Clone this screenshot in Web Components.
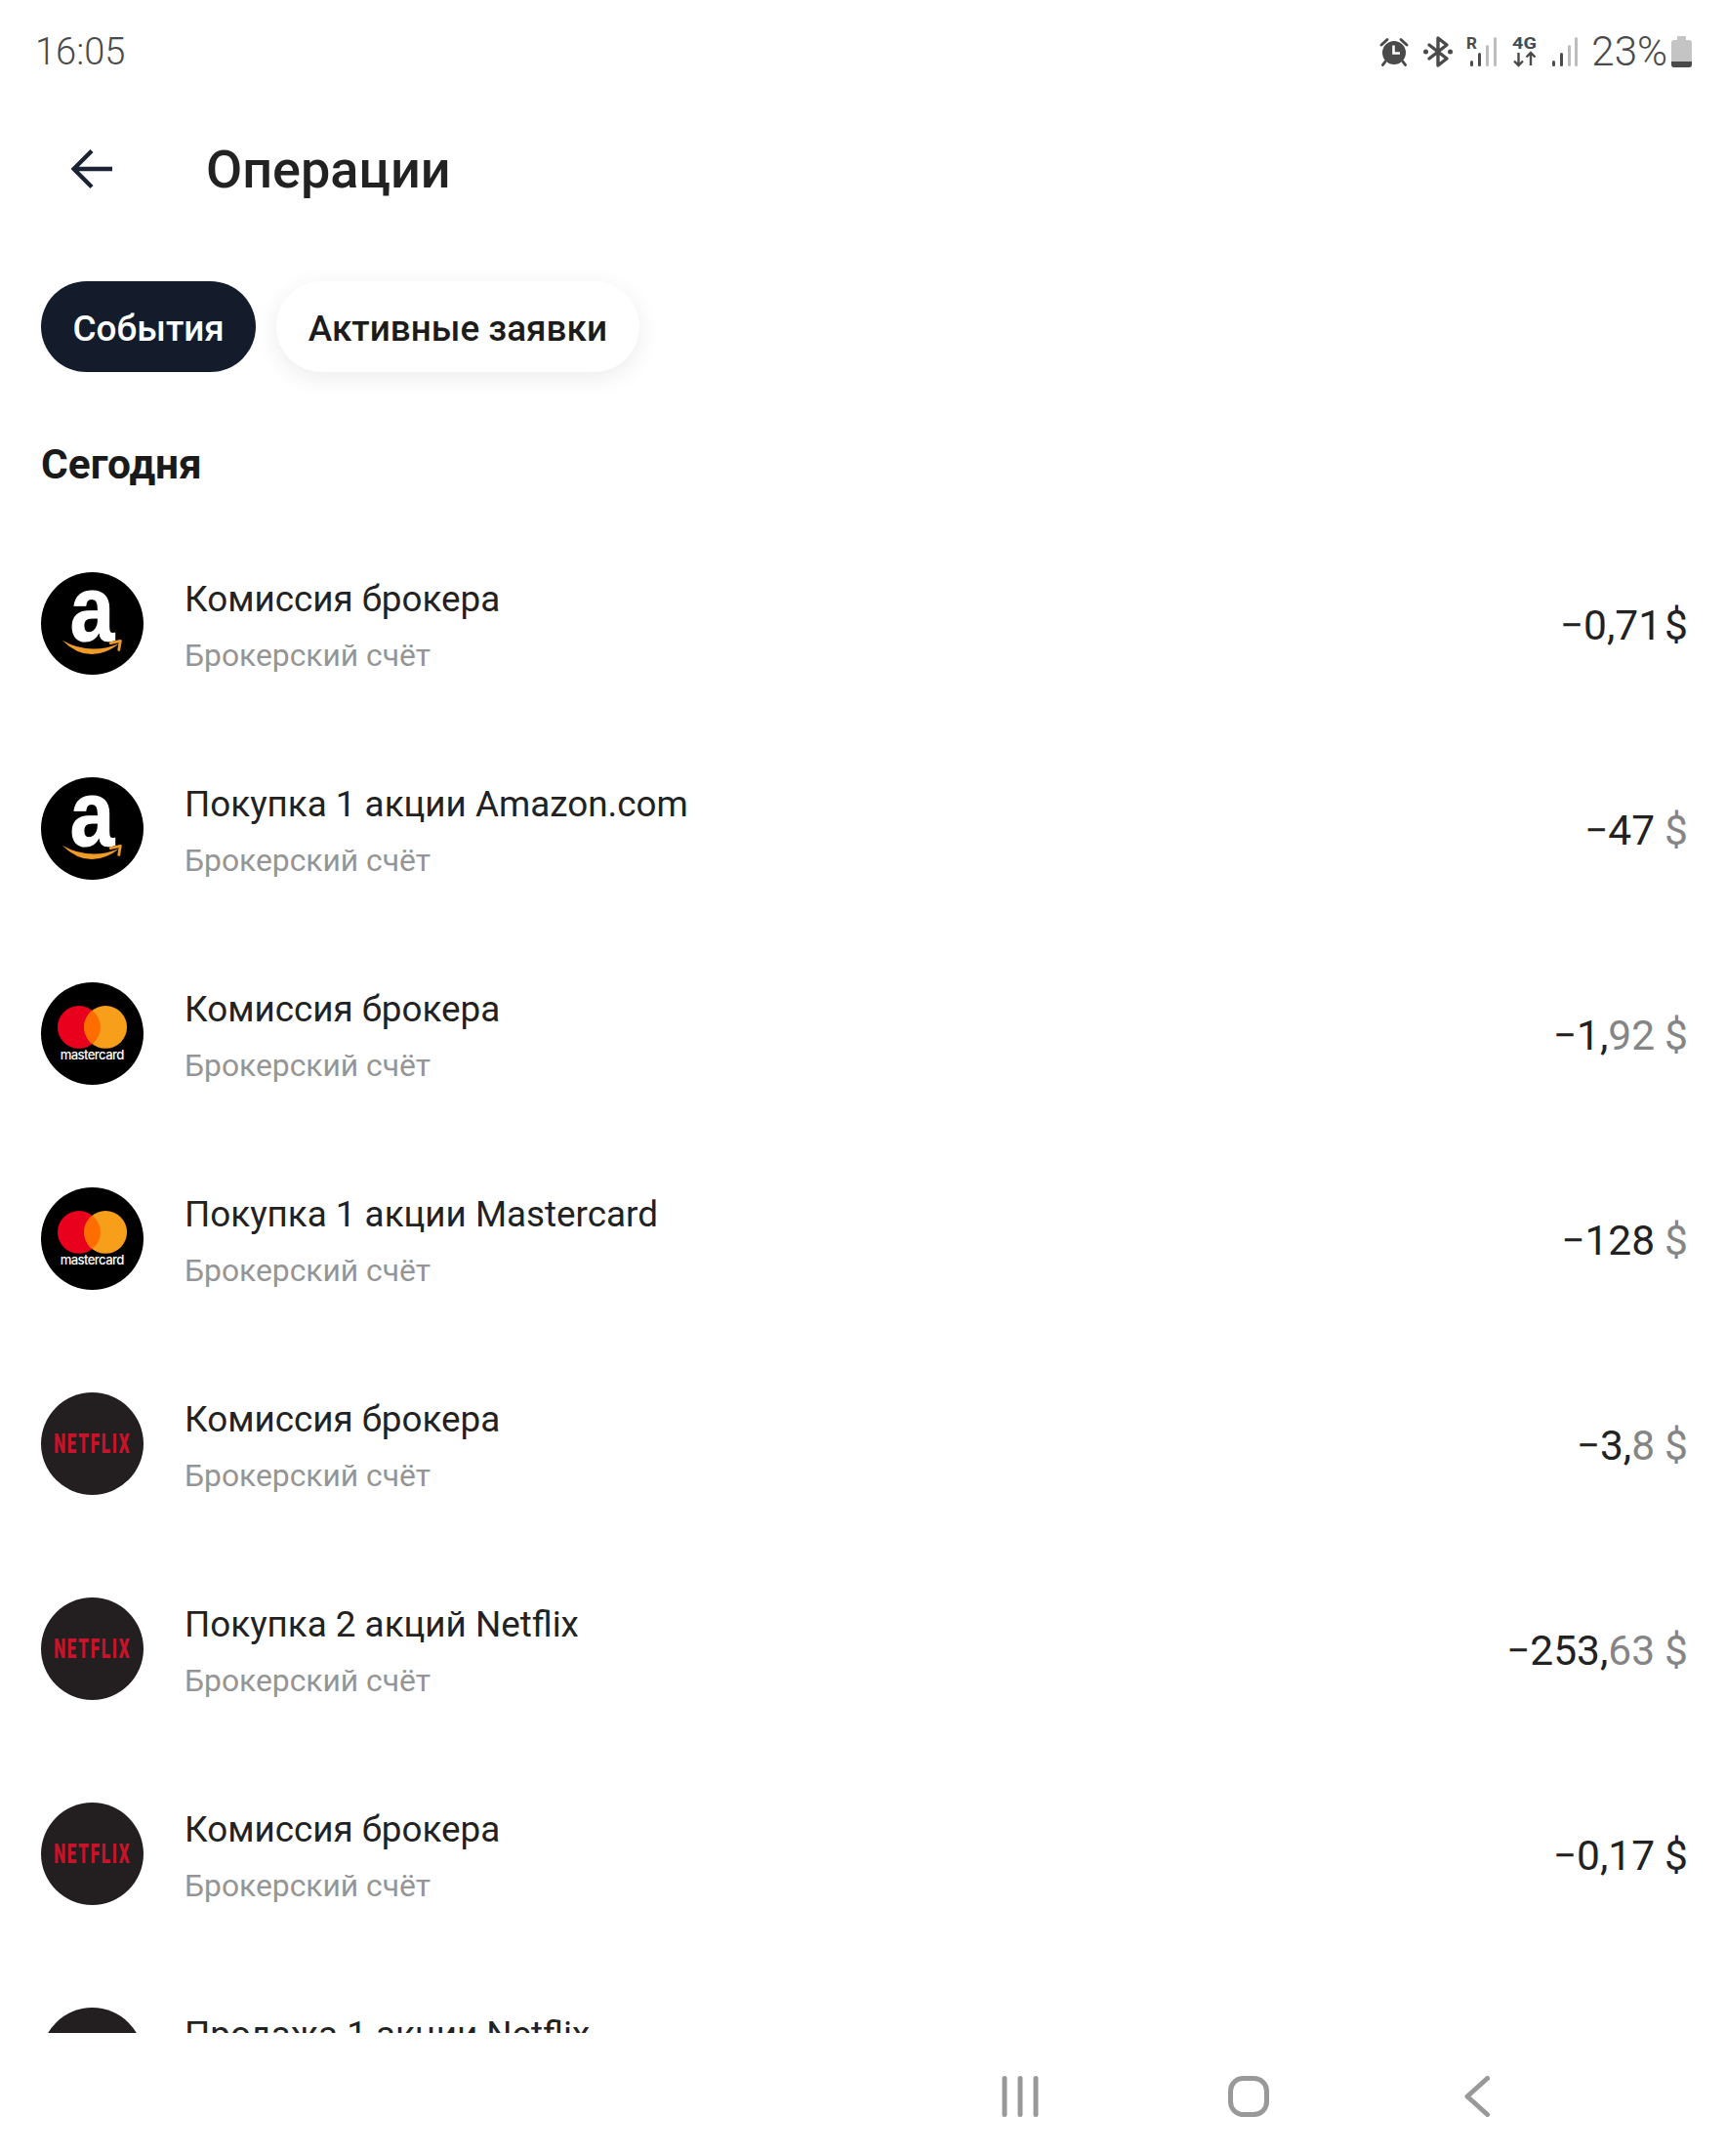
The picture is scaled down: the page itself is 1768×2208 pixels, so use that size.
<!DOCTYPE html>
<html lang="ru">
<head>
<meta charset="utf-8">
<title>Операции</title>
<style>
  html, body { margin: 0; background: #fff; }
  body { font-family: Roboto, "Noto Sans", sans-serif; }
</style>
</head>
<body>
<app-page>
  <status-bar slot="status" time="16:05" battery="23%"></status-bar>
  <page-header slot="header">Операции</page-header>
  <filter-pills slot="filters">
    <filter-pill active>События</filter-pill>
    <filter-pill>Активные заявки</filter-pill>
  </filter-pills>
  <section-title slot="section">Сегодня</section-title>
  <op-row logo="amazon">Комиссия брокера<span slot="sub">Брокерский счёт</span><op-amount slot="amount" whole="−0,71" cur="$" strong tight></op-amount></op-row>
  <op-row logo="amazon">Покупка 1 акции Amazon.com<span slot="sub">Брокерский счёт</span><op-amount slot="amount" whole="−47" cur="$"></op-amount></op-row>
  <op-row logo="mastercard">Комиссия брокера<span slot="sub">Брокерский счёт</span><op-amount slot="amount" whole="−1," frac="92" cur="$"></op-amount></op-row>
  <op-row logo="mastercard">Покупка 1 акции Mastercard<span slot="sub">Брокерский счёт</span><op-amount slot="amount" whole="−128" cur="$"></op-amount></op-row>
  <op-row logo="netflix">Комиссия брокера<span slot="sub">Брокерский счёт</span><op-amount slot="amount" whole="−3," frac="8" cur="$"></op-amount></op-row>
  <op-row logo="netflix">Покупка 2 акций Netflix<span slot="sub">Брокерский счёт</span><op-amount slot="amount" whole="−253," frac="63" cur="$"></op-amount></op-row>
  <op-row logo="netflix">Комиссия брокера<span slot="sub">Брокерский счёт</span><op-amount slot="amount" whole="−0,17" cur="$" strong></op-amount></op-row>
  <op-row logo="netflix">Продажа 1 акции Netflix<span slot="sub">Брокерский счёт</span></op-row>
  <nav-bar slot="nav"></nav-bar>
</app-page>

<script>
const FONT = 'Roboto, "Noto Sans", sans-serif'

class AppPage extends HTMLElement {
  connectedCallback() {
    if (!this.shadowRoot) this.attachShadow({ mode: 'open' })
    this.shadowRoot.innerHTML = `
      <style>
        :host {
          display: flex;
          flex-direction: column;
          width: 1768px;
          height: 2208px;
          overflow: hidden;
          background: #fff;
          font-family: ${FONT};
          color: #1a1a1a;
        }
        .list {
          display: flex;
          flex-direction: column;
          height: 1549px;
          overflow: hidden;
          flex-shrink: 0;
        }
      </style>
      <slot name="status"></slot>
      <slot name="header"></slot>
      <slot name="filters"></slot>
      <slot name="section"></slot>
      <div class="list"><slot></slot></div>
      <slot name="nav"></slot>
    `
  }
}

class StatusBar extends HTMLElement {
  connectedCallback() {
    if (!this.shadowRoot) this.attachShadow({ mode: 'open' })
    const dark = '#4a4a4a'
    const pale = '#bdbdbd'
    this.shadowRoot.innerHTML = `
      <style>
        :host {
          display: flex;
          align-items: center;
          justify-content: space-between;
          box-sizing: border-box;
          height: 104px;
          padding: 2px 35px 0 36px;
          color: ${dark};
          font-weight: 300;
          font-size: 38px;
          flex-shrink: 0;
        }
        .right { display: flex; align-items: center; }
        svg { display: block; overflow: visible; }
        .pct { margin: 0 4px 0 13px; padding-bottom: 2px; font-size: 42px; }
      </style>
      <span>${this.getAttribute('time')}</span>
      <div class="right">
        <svg width="30" height="30" viewBox="0 0 30 30" style="margin-right:15px">
          <circle cx="15" cy="16" r="12" fill="${dark}"/>
          <path d="M14.5 8.5V16.5H21" fill="none" stroke="#fff" stroke-width="2.6"/>
          <path d="M2 8 8 2.5M28 8 22 2.5M6 25 3.5 28.5M24 25 26.5 28.5" stroke="${dark}" stroke-width="3" stroke-linecap="round"/>
        </svg>
        <svg width="30" height="32" viewBox="0 0 30 32" style="margin-right:14px">
          <path d="M6 9 24 23 15 30V2L24 9 6 23" fill="none" stroke="${dark}" stroke-width="3.4" stroke-linejoin="round" stroke-linecap="round"/>
          <circle cx="2.5" cy="16" r="2.5" fill="${dark}"/>
          <circle cx="27.5" cy="16" r="2.5" fill="${dark}"/>
        </svg>
        <svg width="32" height="32" viewBox="0 0 32 32" style="margin-right:15px">
          <text x="0" y="13" font-family="Roboto, sans-serif" font-size="17" font-weight="700" fill="${dark}">R</text>
          <rect x="4" y="25" width="3" height="6" rx="1.5" fill="${dark}"/>
          <rect x="12" y="17" width="3" height="14" rx="1.5" fill="${dark}"/>
          <rect x="20" y="9" width="3" height="22" rx="1.5" fill="${pale}"/>
          <rect x="28" y="1" width="3" height="30" rx="1.5" fill="${pale}"/>
        </svg>
        <svg width="26" height="32" viewBox="0 0 26 32" style="margin-right:14px">
          <text x="0" y="13" textLength="25" lengthAdjust="spacingAndGlyphs" font-family="Roboto, sans-serif" font-size="17" font-weight="700" fill="${dark}">4G</text>
          <path d="M6.5 17V30M2 25.5 6.5 30 11 25.5M19 30V17M14.5 21.5 19 17 23.5 21.5" fill="none" stroke="${dark}" stroke-width="2.4"/>
        </svg>
        <svg width="28" height="32" viewBox="0 0 28 32">
          <rect x="1" y="25" width="3" height="6" rx="1.5" fill="${dark}"/>
          <rect x="9" y="17" width="3" height="14" rx="1.5" fill="${dark}"/>
          <rect x="17" y="9" width="3" height="22" rx="1.5" fill="${pale}"/>
          <rect x="24" y="1" width="3" height="30" rx="1.5" fill="${pale}"/>
        </svg>
        <span class="pct">${this.getAttribute('battery')}</span>
        <svg width="21" height="32" viewBox="0 0 21 32">
          <path d="M7 0h7a1 1 0 0 1 1 1v3h3a3 3 0 0 1 3 3v22a3 3 0 0 1-3 3H3a3 3 0 0 1-3-3V7a3 3 0 0 1 3-3h3V1a1 1 0 0 1 1-1z" fill="#c4c4c4"/>
          <path d="M0 26H21V29a3 3 0 0 1-3 3H3a3 3 0 0 1-3-3z" fill="${dark}"/>
        </svg>
      </div>
    `
  }
}

class PageHeader extends HTMLElement {
  connectedCallback() {
    if (!this.shadowRoot) this.attachShadow({ mode: 'open' })
    this.shadowRoot.innerHTML = `
      <style>
        :host {
          display: flex;
          align-items: center;
          height: 138px;
          padding-left: 73px;
          gap: 95px;
          flex-shrink: 0;
          font-size: 54px;
          font-weight: 500;
          color: #222;
        }
        svg { display: block; flex-shrink: 0; }
      </style>
      <svg width="43" height="42" viewBox="0 0 43 42" aria-hidden="true">
        <path d="M42 21H3M21 2.5 2.5 21 21 39.5" fill="none" stroke="#1a2233" stroke-width="4.4"/>
      </svg>
      <slot></slot>
    `
  }
}

class FilterPills extends HTMLElement {
  connectedCallback() {
    if (!this.shadowRoot) this.attachShadow({ mode: 'open' })
    this.shadowRoot.innerHTML = `
      <style>
        :host {
          display: flex;
          gap: 21px;
          margin-top: 46px;
          padding-left: 42px;
          flex-shrink: 0;
        }
      </style>
      <slot></slot>
    `
  }
}

class FilterPill extends HTMLElement {
  connectedCallback() {
    if (!this.shadowRoot) this.attachShadow({ mode: 'open' })
    this.shadowRoot.innerHTML = `
      <style>
        :host {
          display: flex;
          align-items: center;
          height: 93px;
          padding: 3px 32.5px 0;
          box-sizing: border-box;
          border-radius: 46.5px;
          font-size: 36.9px;
          font-weight: 500;
          color: #1c1c1c;
          background: #fff;
          box-shadow: 0 6px 24px rgba(0, 0, 0, 0.08);
        }
        :host([active]) {
          background: #141c2b;
          color: #fff;
          box-shadow: none;
        }
      </style>
      <slot></slot>
    `
  }
}

class SectionTitle extends HTMLElement {
  connectedCallback() {
    if (!this.shadowRoot) this.attachShadow({ mode: 'open' })
    this.shadowRoot.innerHTML = `
      <style>
        :host {
          display: block;
          margin: 70px 0 32px;
          padding-left: 42px;
          font-size: 42.4px;
          line-height: 50px;
          font-weight: 700;
          color: #1a1a1a;
          flex-shrink: 0;
        }
      </style>
      <slot></slot>
    `
  }
}

const LOGOS = {
  amazon: `
    <circle cx="52" cy="52" r="52" fill="#000"/>
    <text transform="translate(52 69) scale(.86 1)" text-anchor="middle" font-family="'Liberation Sans', sans-serif" font-weight="700" font-size="94" fill="#fff" stroke="#fff" stroke-width="1.2">a</text>
    <path d="M21.5 69Q49 96 80 72Q50 85 21.5 69z" fill="#f09a28"/>
    <path d="M70.6 72 80.6 69.7 79 78.7" fill="none" stroke="#f09a28" stroke-width="2.8" stroke-linecap="round" stroke-linejoin="round"/>
  `,
  mastercard: `
    <circle cx="52" cy="52" r="52" fill="#000"/>
    <circle cx="38.5" cy="45.5" r="21.7" fill="#e8001c"/>
    <circle cx="65.5" cy="45.5" r="21.7" fill="#f79e1b"/>
    <path d="M52 28.4a21.7 21.7 0 0 1 0 34.2a21.7 21.7 0 0 1 0-34.2z" fill="#ff6d00"/>
    <text x="19.5" y="78" textLength="65" font-family="Inter, Roboto, sans-serif" font-weight="500" font-size="13" fill="#fff">mastercard</text>
  `,
  netflix: `
    <circle cx="52" cy="52" r="52" fill="#231f20"/>
    <text transform="translate(13 61) scale(.6 1)" textLength="128" font-family="Roboto, sans-serif" font-weight="900" font-size="28" fill="#c8142b">NETFLIX</text>
  `,
}

class OpRow extends HTMLElement {
  connectedCallback() {
    if (!this.shadowRoot) this.attachShadow({ mode: 'open' })
    const logo = LOGOS[this.getAttribute('logo')] || ''
    this.shadowRoot.innerHTML = `
      <style>
        :host {
          display: grid;
          grid-template-columns: 105px 1fr auto;
          column-gap: 42px;
          align-items: center;
          height: 210px;
          padding: 0 39px 0 42px;
          flex-shrink: 0;
        }
        svg { display: block; overflow: visible; }
        .text { display: flex; flex-direction: column; padding-top: 6px; }
        .title { font-size: 36.8px; line-height: 44px; color: #222; }
        .sub { font-size: 31.8px; line-height: 40px; margin-top: 15px; color: #959595; }
        .amount { padding-top: 6px; }
      </style>
      <svg width="105" height="105" viewBox="0 0 104 104" aria-hidden="true">${logo}</svg>
      <div class="text">
        <div class="title"><slot></slot></div>
        <div class="sub"><slot name="sub"></slot></div>
      </div>
      <div class="amount"><slot name="amount"></slot></div>
    `
  }
}

class OpAmount extends HTMLElement {
  connectedCallback() {
    if (!this.shadowRoot) this.attachShadow({ mode: 'open' })
    const whole = this.getAttribute('whole') || ''
    const frac = this.getAttribute('frac') || ''
    const cur = this.getAttribute('cur') || ''
    this.shadowRoot.innerHTML = `
      <style>
        :host { display: block; font-size: 42.5px; line-height: 50px; color: #222; white-space: nowrap; }
        .muted { color: #858585; }
        .cur { margin-left: 10px; }
        :host([strong]) .cur { color: #222; }
        :host([tight]) .cur { margin-left: 3px; }
      </style>
      <span>${whole}</span><span class="muted">${frac}</span><span class="cur muted">${cur}</span>
    `
  }
}

class NavBar extends HTMLElement {
  connectedCallback() {
    if (!this.shadowRoot) this.attachShadow({ mode: 'open' })
    const c = '#999'
    this.shadowRoot.innerHTML = `
      <style>
        :host {
          display: flex;
          align-items: center;
          box-sizing: border-box;
          height: 126px;
          padding: 4px 0 0 1026px;
          flex-shrink: 0;
        }
        svg { display: block; }
      </style>
      <svg width="38" height="42" viewBox="0 0 38 42" style="margin-right:194px">
        <path d="M3 2.5V39.5M19 2.5V39.5M35 2.5V39.5" stroke="${c}" stroke-width="5" stroke-linecap="round"/>
      </svg>
      <svg width="42" height="42" viewBox="0 0 42 42" style="margin-right:200px">
        <rect x="2.5" y="2.5" width="37" height="37" rx="13" fill="none" stroke="${c}" stroke-width="5"/>
      </svg>
      <svg width="26" height="42" viewBox="0 0 26 42">
        <path d="M23.5 2.5 3 21 23.5 39.5" fill="none" stroke="${c}" stroke-width="5" stroke-linecap="round" stroke-linejoin="round"/>
      </svg>
    `
  }
}

customElements.define('app-page', AppPage)
customElements.define('status-bar', StatusBar)
customElements.define('page-header', PageHeader)
customElements.define('filter-pills', FilterPills)
customElements.define('filter-pill', FilterPill)
customElements.define('section-title', SectionTitle)
customElements.define('op-row', OpRow)
customElements.define('op-amount', OpAmount)
customElements.define('nav-bar', NavBar)
</script>
</body>
</html>
